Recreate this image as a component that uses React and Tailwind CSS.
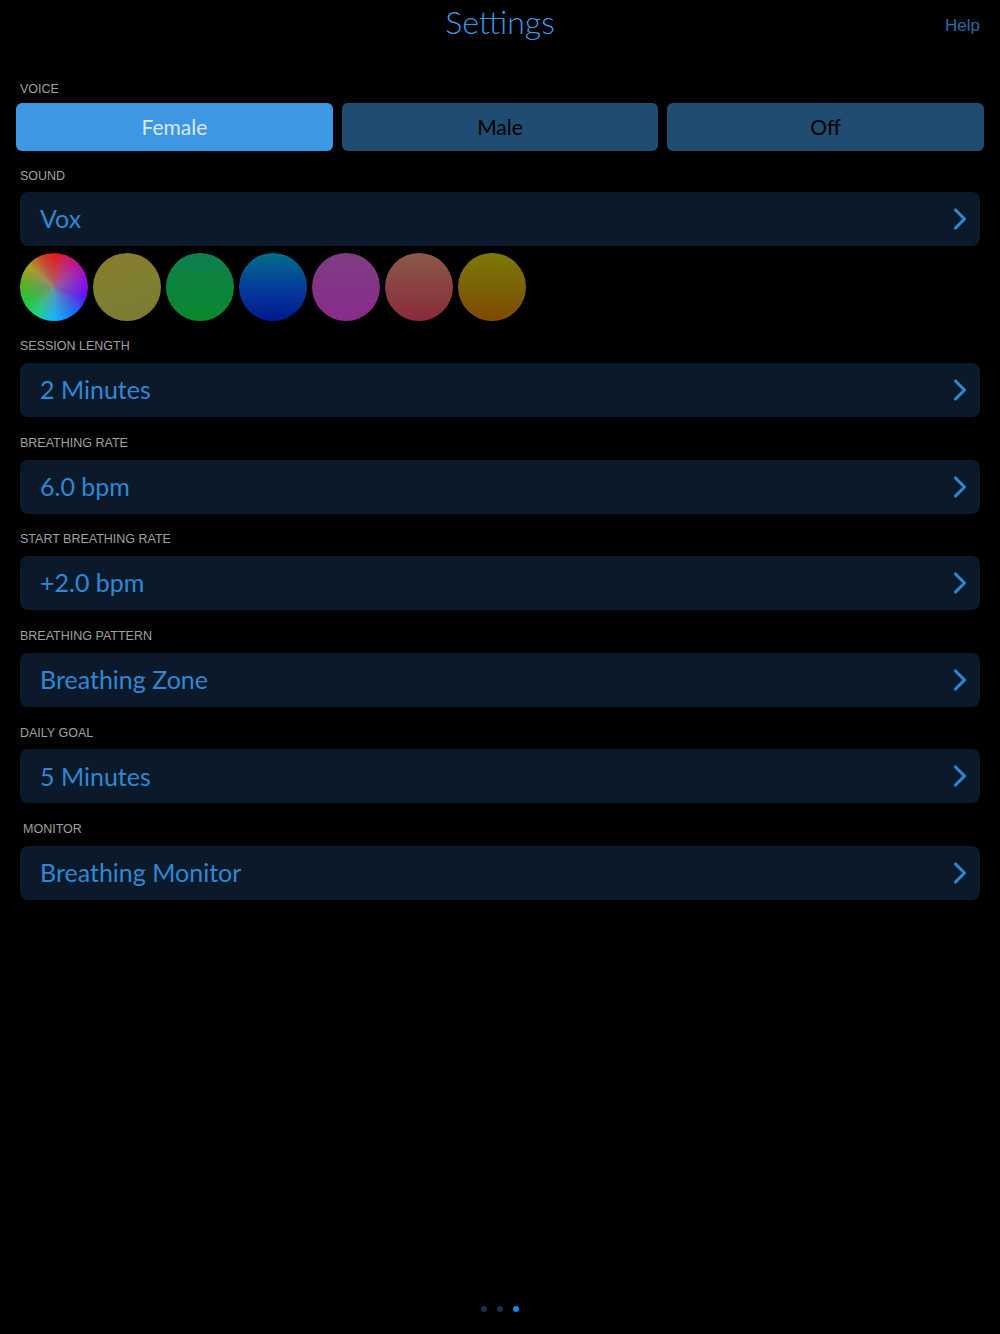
import { ChevronRight } from 'lucide-react';

const rows = [
    { label: 'SESSION LENGTH', value: '2 Minutes' },
    { label: 'BREATHING RATE', value: '6.0 bpm' },
    { label: 'START BREATHING RATE', value: '+2.0 bpm' },
    { label: 'BREATHING PATTERN', value: 'Breathing Zone' },
    { label: 'DAILY GOAL', value: '5 Minutes' },
    { label: 'MONITOR', value: 'Breathing Monitor', indent: true },
];

const swatches = [
    'bg-[linear-gradient(160deg,#8a7a2a,#7f8030_50%,#7a7a36)]',
    'bg-[linear-gradient(180deg,#0e8050,#0a8a2a)]',
    'bg-[linear-gradient(180deg,#006e8a,#06349a_60%,#001a8c)]',
    'bg-[linear-gradient(180deg,#7e3e82,#8a2a8a)]',
    'bg-[linear-gradient(180deg,#8a5a4a,#8a2a3a)]',
    'bg-[linear-gradient(180deg,#7a7a06,#7e4a06)]',
];

const Label = ({ children, indent }) => (
    <div className={`h-[17px] flex items-center text-[12.5px] text-[#a0a0a0] font-['Liberation_Sans',sans-serif] ${indent ? 'pl-[23px]' : 'pl-5'}`}>
        {children}
    </div>
);

const Row = ({ value }) => (
    <div className="mx-5 h-[54px] rounded-lg bg-[#0a1a2b] flex items-center justify-between pl-5 pr-[2px]">
        <span className="text-[25px] text-[#2f88d4] font-['Lato',sans-serif]">{value}</span>
        <ChevronRight size={36} strokeWidth={2.1} className="text-[#2f88d4]" />
    </div>
);

export default function App() {
    return (
        <div className="w-[1000px] h-[1334px] bg-black flex flex-col font-['Lato',sans-serif]">
            <div className="relative h-[48px] flex items-center justify-center">
                <span className="-mt-[5px] text-[32px] font-light text-[#3a98e6]">Settings</span>
                <span className="absolute right-5 top-[13px] text-[17px] text-[#2a6aa2] font-['Liberation_Sans',sans-serif]">Help</span>
            </div>

            <div className="mt-[33px]">
                <Label>VOICE</Label>
            </div>
            <div className="mt-[5px] px-4 grid grid-cols-3 gap-[9px]">
                <div className="h-[48px] rounded-md bg-[#3d97e3] flex items-center justify-center text-[21px] text-[#dbe8f5]">Female</div>
                <div className="h-[48px] rounded-md bg-[#1f4d72] flex items-center justify-center text-[21px] text-black">Male</div>
                <div className="h-[48px] rounded-md bg-[#1f4d72] flex items-center justify-center text-[21px] text-black">Off</div>
            </div>

            <div className="mt-[17px]">
                <Label>SOUND</Label>
            </div>
            <div className="mt-[7px]">
                <Row value="Vox" />
            </div>
            <div className="mt-[7px] px-5 flex gap-[5px]">
                <div className="relative w-[68px] h-[68px] rounded-full overflow-hidden bg-[conic-gradient(from_0deg,#e81818,#c0109a_12%,#8a10e0_22%,#5a10ff_30%,#1a70ff_40%,#10b8ff_50%,#18d880_60%,#20c830_68%,#60b020_78%,#b0a020_86%,#d04020_94%,#e81818)]">
                    <div className="absolute inset-0 rounded-full bg-[radial-gradient(circle,rgba(140,130,140,0.75)_0%,rgba(140,130,140,0.35)_35%,rgba(140,130,140,0)_70%)]" />
                </div>
                {swatches.map((s, i) => (
                    <div key={i} className={`w-[68px] h-[68px] rounded-full ${s}`} />
                ))}
            </div>

            <div className="mt-[17px] flex flex-col">
                {rows.map((r, i) => (
                    <div key={i} className={i === 0 ? '' : 'mt-[17.6px]'}>
                        <Label indent={r.indent}>{r.label}</Label>
                        <div className="mt-[8px]">
                            <Row value={r.value} />
                        </div>
                    </div>
                ))}
            </div>

            <div className="mt-auto mb-[22px] flex justify-center gap-[10px]">
                <div className="w-[6px] h-[6px] rounded-full bg-[#0d3556]" />
                <div className="w-[6px] h-[6px] rounded-full bg-[#0d3556]" />
                <div className="w-[6px] h-[6px] rounded-full bg-[#1289f0]" />
            </div>
        </div>
    );
}
